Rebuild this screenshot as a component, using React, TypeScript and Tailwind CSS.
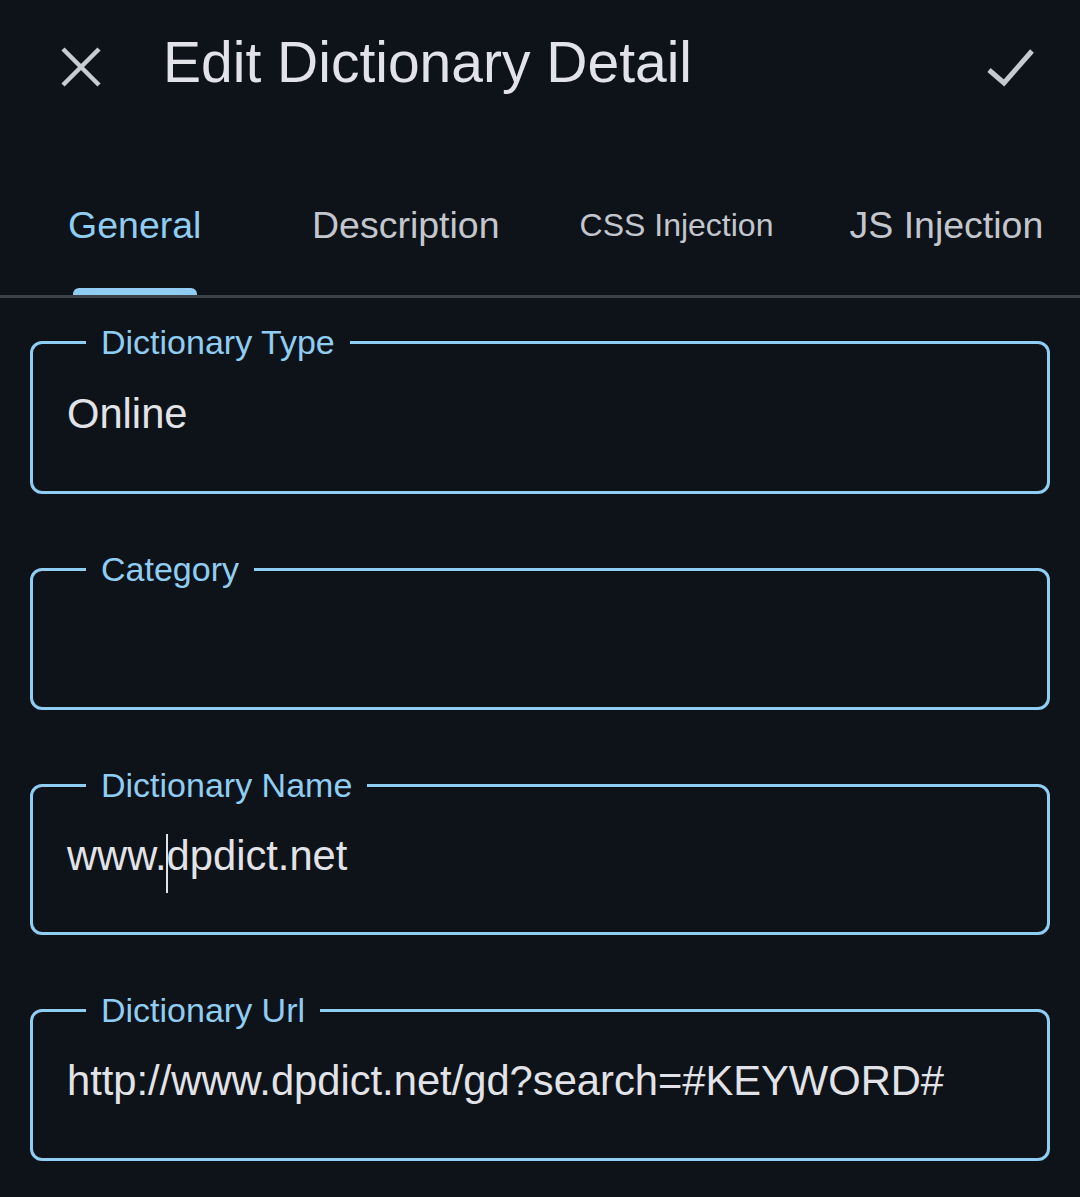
import React from 'react';

const fields = [
  { label: 'Dictionary Type', value: 'Online', h: 'h-[153px]' },
  { label: 'Category', value: '', h: 'h-[142px]' },
  { label: 'Dictionary Name', value: 'www.dpdict.net', h: 'h-[151px]', cursor: 4 },
  { label: 'Dictionary Url', value: 'http://www.dpdict.net/gd?search=#KEYWORD#', h: 'h-[152px]' },
];

function Field({ label, value, h, cursor }: { label: string; value: string; h: string; cursor?: number }) {
  return (
    <div className={`relative ${h} rounded-[12px] border-[3px] border-[#90cdf2] flex items-center pl-[34px] pb-[8px]`}>
      <span className="absolute -top-[23px] left-[53px] px-[15px] bg-[#0e1319] text-[#90cdf2] text-[34px] leading-[42px]">
        {label}
      </span>
      <span className="text-[#e2e3e8] text-[41.7px] leading-[48px] flex items-center">
        {cursor !== undefined ? (
          <>
            {value.slice(0, cursor)}
            <span className="inline-block w-[2px] h-[59px] bg-[#e2e3e8] -mx-[1px] relative top-[8px]" />
            {value.slice(cursor)}
          </>
        ) : (
          value
        )}
      </span>
    </div>
  );
}

export default function App() {
  return (
    <div className="w-[1080px] h-[1197px] bg-[#0e1319] overflow-hidden" style={{ fontFamily: '"Liberation Sans", Arial, sans-serif' }}>
      {/* top bar */}
      <header className="h-[135px] flex items-start pt-[27px]">
        <button className="w-[80px] h-[80px] ml-[41px] flex items-center justify-center">
          <svg width="40" height="40" viewBox="0 0 40 40" fill="none" stroke="#c9ccd3" strokeWidth="4.5">
            <path d="M2 2 L38 38 M38 2 L2 38" />
          </svg>
        </button>
        <h1 className="ml-[42px] mt-[2px] text-[57px] leading-[66px] text-[#e2e3e8]">Edit Dictionary Detail</h1>
        <button className="ml-auto mr-[30px] w-[80px] h-[80px] flex items-center justify-center">
          <svg width="48" height="40" viewBox="0 0 48 40" fill="none" stroke="#c6c9d0" strokeWidth="5">
            <path d="M3 23 L18 36 L46 4" />
          </svg>
        </button>
      </header>

      {/* tabs */}
      <nav className="h-[163px] border-b-[3px] border-[#3c4148]">
        <div className="flex w-full items-center h-[160px] pt-[20px]">
          <div className="relative h-full flex items-center pl-[68px] w-[270px]">
            <span className="text-[#90cdf2] text-[37.5px]">General</span>
            <span className="absolute bottom-0 left-[73px] w-[124px] h-[7px] rounded-t-[6px] bg-[#90cdf2]" />
          </div>
          <span className="ml-[42px] text-[#c3c6cd] text-[37.5px]">Description</span>
          <span className="ml-[80px] text-[#c3c6cd] text-[32px]">CSS Injection</span>
          <span className="ml-[76px] text-[#c3c6cd] text-[37.5px]">JS Injection</span>
        </div>
      </nav>

      {/* form */}
      <main className="px-[30px] pt-[43px] flex flex-col gap-[74px]">
        {fields.map((f) => (
          <Field key={f.label} label={f.label} value={f.value} h={f.h} cursor={f.cursor} />
        ))}
      </main>
    </div>
  );
}
